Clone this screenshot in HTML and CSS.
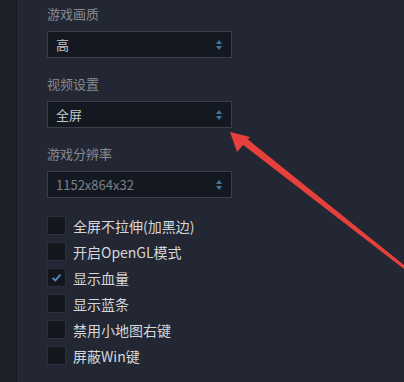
FILE: index.html
```html
<!DOCTYPE html>
<html lang="zh-CN">
<head>
    <meta charset="UTF-8">
    <title>游戏设置</title>
    <link rel="stylesheet" href="styles.css">
</head>
<body>
    <div class="layout">
        <div class="sidebar"></div>
        <div class="settings">
            <div class="field">
                <div class="field-label">游戏画质</div>
                <div class="select">
                    <span>高</span>
                    <span class="spin"><i class="up"></i><i class="down"></i></span>
                </div>
            </div>
            <div class="field">
                <div class="field-label">视频设置</div>
                <div class="select">
                    <span>全屏</span>
                    <span class="spin"><i class="up"></i><i class="down"></i></span>
                </div>
            </div>
            <div class="field">
                <div class="field-label">游戏分辨率</div>
                <div class="select disabled">
                    <span>1152x864x32</span>
                    <span class="spin"><i class="up"></i><i class="down"></i></span>
                </div>
            </div>

            <div class="options">
                <label class="option"><span class="box"></span>全屏不拉伸(加黑边)</label>
                <label class="option"><span class="box"></span>开启OpenGL模式</label>
                <label class="option">
                    <span class="box checked">
                        <svg width="13" height="13" viewBox="0 0 13 13"><path d="M2.5 6.8 L5.3 9.4 L10.5 3.6" fill="none" stroke="#4a90cc" stroke-width="1.8"/></svg>
                    </span>显示血量
                </label>
                <label class="option"><span class="box"></span>显示蓝条</label>
                <label class="option"><span class="box"></span>禁用小地图右键</label>
                <label class="option"><span class="box"></span>屏蔽Win键</label>
            </div>
        </div>
    </div>

    <!-- 标注箭头 -->
    <svg class="annotation" width="404" height="382" viewBox="0 0 404 382">
        <path d="M404 265 L404 269 L242 144 L246 138 Z" fill="#e5403b"/>
        <path d="M230 132 L250 137 L237 152 Z" fill="#e5403b"/>
    </svg>
</body>
</html>
```

FILE: styles.css
```css
body {
    margin: 0;
    background-color: #222733;
    font-family: "Noto Sans CJK SC", "Noto Sans", sans-serif;
    overflow: hidden;
}
.layout {
    display: flex;
    height: 382px;
}
.sidebar {
    width: 16px;
    background: #1c2029;
    border-right: 1px solid #15181e;
}
.settings {
    padding: 4px 0 0 30px;
}
.field {
    margin-bottom: 16px;
}
.field-label {
    font-size: 13px;
    line-height: 20px;
    color: #868a92;
    margin-bottom: 7px;
}
.select {
    height: 25px;
    width: 166px;
    border: 1px solid #3a3f4a;
    background: #141820;
    display: flex;
    align-items: center;
    justify-content: space-between;
    padding: 0 9px 0 8px;
    color: #c4c6ca;
    font-size: 13px;
}
.select.disabled {
    color: #7c8088;
}
.spin {
    display: flex;
    flex-direction: column;
    gap: 2px;
}
.spin i {
    display: block;
    width: 0;
    height: 0;
    border-left: 3px solid transparent;
    border-right: 3px solid transparent;
}
.spin .up {
    border-bottom: 4px solid #4178a3;
}
.spin .down {
    border-top: 4px solid #4178a3;
}
.options {
    margin-top: 18px;
    display: flex;
    flex-direction: column;
    gap: 7px;
}
.option {
    display: flex;
    align-items: center;
    gap: 7px;
    height: 19px;
    font-size: 14px;
    color: #d6d7da;
}
.box {
    width: 17px;
    height: 17px;
    border: 1px solid #2b303a;
    background: #13161d;
    display: flex;
    align-items: center;
    justify-content: center;
}
.annotation {
    position: absolute;
    left: 0;
    top: 0;
}
```
